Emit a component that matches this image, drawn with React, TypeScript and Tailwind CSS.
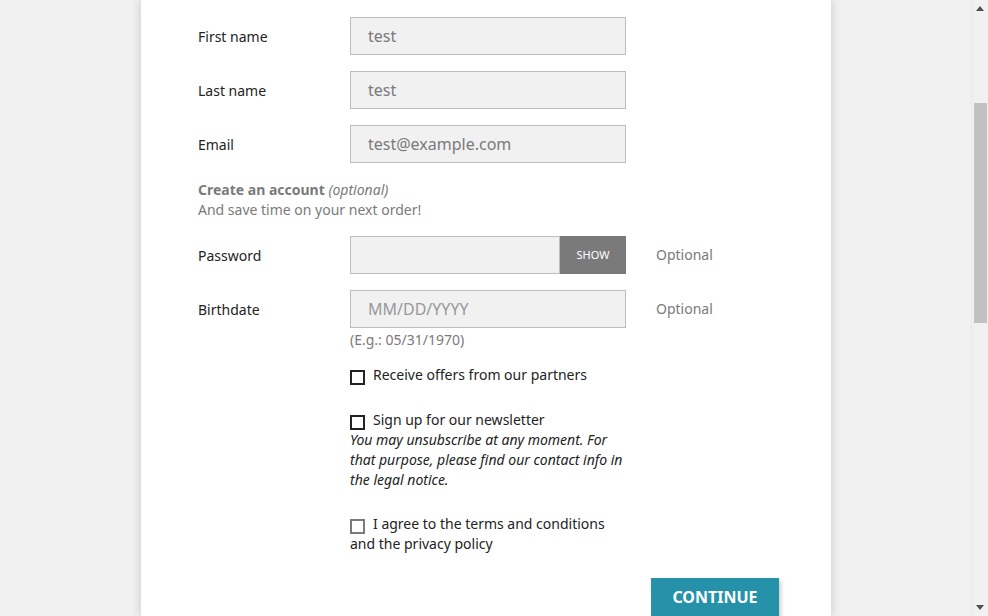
import { useState } from 'react'

const font = { fontFamily: '"Noto Sans", "Open Sans", sans-serif' }

function Row({ label, children, comment }: { label: string; children: React.ReactNode; comment?: string }) {
  return (
    <div className="flex items-start">
      <label className="w-[152px] h-[38px] pt-[2px] flex items-center text-sm text-[#232323]">{label}</label>
      <div className="w-[276px]">{children}</div>
      {comment && <div className="ml-[30px] h-[38px] flex items-center text-sm text-[#7a7a7a]">{comment}</div>}
    </div>
  )
}

function Input({ value, placeholder }: { value?: string; placeholder?: string }) {
  return (
    <input
      defaultValue={value}
      placeholder={placeholder}
      className="w-full h-[38px] px-[17px] bg-[#f1f1f1] border border-[#bdbdbd] text-base text-[#7a7a7a] placeholder:text-[#999] outline-none"
    />
  )
}

function Box({ muted }: { muted?: boolean }) {
  return (
    <span
      className={`inline-block shrink-0 w-[15px] h-[15px] border-2 ${muted ? 'border-[#7a7a7a]' : 'border-[#232323]'} bg-white mr-2 align-[-5px]`}
    />
  )
}

export default function App() {
  const [showPass, setShowPass] = useState(false)

  return (
    <div className="flex h-[616px] overflow-hidden bg-[#f1f1f1]" style={font}>
      <div className="flex-1 flex">
        <div className="ml-[141px] w-[690px] bg-white shadow-[0_0_10px_rgba(0,0,0,0.18)] px-[57px] pt-[17px]">
          <div className="flex flex-col gap-4">
            <Row label="First name">
              <Input value="test" />
            </Row>
            <Row label="Last name">
              <Input value="test" />
            </Row>
            <Row label="Email">
              <Input value="test@example.com" />
            </Row>
          </div>

          <div className="mt-[17px] text-sm leading-5 text-[#7a7a7a]">
            <p>
              <span className="font-bold">Create an account</span> <em>(optional)</em>
            </p>
            <p>And save time on your next order!</p>
          </div>

          <div className="mt-4 flex flex-col gap-4">
            <Row label="Password" comment="Optional">
              <div className="flex h-[38px]">
                <input
                  type={showPass ? 'text' : 'password'}
                  className="flex-1 min-w-0 h-full px-[17px] bg-[#f1f1f1] border border-[#bdbdbd] outline-none"
                />
                <button
                  onClick={() => setShowPass(!showPass)}
                  className="w-[66px] h-full bg-[#7a7a7a] text-white text-[11px] uppercase"
                >
                  Show
                </button>
              </div>
            </Row>
            <Row label="Birthdate" comment="Optional">
              <Input placeholder="MM/DD/YYYY" />
              <p className="text-sm leading-5 text-[#7a7a7a] mt-[2px]">(E.g.: 05/31/1970)</p>
            </Row>
          </div>

          <div className="ml-[152px] w-[276px] text-sm leading-5 text-[#232323]">
            <label className="mt-[15px] block">
              <Box />
              Receive offers from our partners
            </label>
            <div className="mt-[25px]">
              <label className="block">
                <Box />
                Sign up for our newsletter
              </label>
              <p className="italic">
                You may unsubscribe at any moment. For that purpose, please find our contact info in the legal notice.
              </p>
            </div>
            <label className="mt-[24px] block">
              <Box muted />
              I agree to the terms and conditions and the privacy policy
            </label>
          </div>

          <div className="flex mt-[24px]">
            <button className="shrink-0 ml-[453px] w-[128px] h-[42px] pb-[4px] bg-[#2592a9] text-white font-bold text-base uppercase shadow-[2px_2px_4px_rgba(0,0,0,0.2)]">
              Continue
            </button>
          </div>
        </div>
      </div>

      <div className="w-[17px] h-full bg-[#f1f1f1] border-l border-[#e8e8e8] flex flex-col items-center">
        <div className="h-[17px] flex items-center justify-center">
          <svg width="8" height="5" viewBox="0 0 8 5"><path d="M4 0 8 5H0z" fill="#505050" /></svg>
        </div>
        <div className="mt-[86px] w-[13px] h-[220px] bg-[#c1c1c1]" />
        <div className="flex-1" />
        <div className="h-[17px] flex items-center justify-center">
          <svg width="8" height="5" viewBox="0 0 8 5"><path d="M0 0h8L4 5z" fill="#505050" /></svg>
        </div>
      </div>
    </div>
  )
}
